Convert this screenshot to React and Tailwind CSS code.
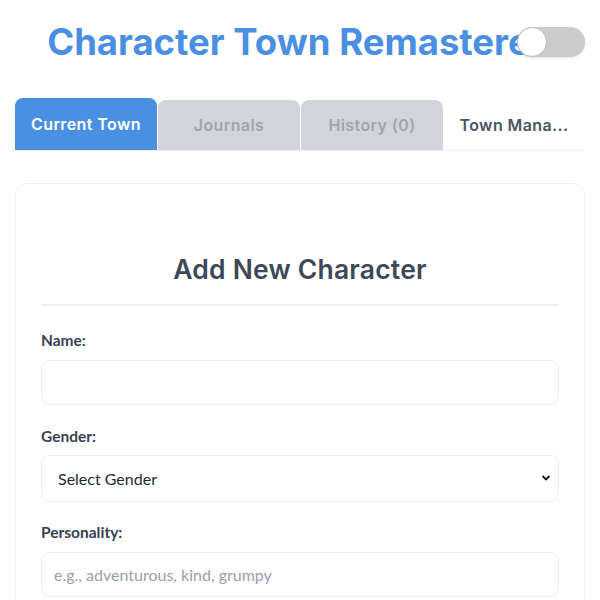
import { useState } from "react";

const heading = { fontFamily: "Inter, 'Noto Sans', sans-serif" };
const body = { fontFamily: "Lato, 'Liberation Sans', sans-serif" };

export default function App() {
    const [dark, setDark] = useState(false);
    const tabs = ["Current Town", "Journals", "History (0)", "Town Mana..."];

    return (
        <div className="min-h-screen bg-white px-[15px]" style={body}>
            {/* Header */}
            <div className="relative pt-[22px] h-[99px]">
                <h1
                    className="text-center text-[36.5px] font-bold leading-[40px] tracking-[0px] text-[#4a8fe2] whitespace-nowrap"
                    style={heading}
                >
                    Character Town Remastered
                </h1>
                <button
                    onClick={() => setDark(!dark)}
                    className="absolute right-0 top-[27px] h-[30px] w-[68px] rounded-full bg-[#cbcbcb] shadow-sm"
                >
                    <span className="absolute left-0 top-0 h-[30px] w-[30px] rounded-full bg-white border border-[#bdbdbd]" />
                </button>
            </div>

            {/* Tabs */}
            <div className="flex items-end border-b border-[#eef1f4] h-[52px]" style={heading}>
                {tabs.map((t, i) => (
                    <div
                        key={t}
                        className={
                            i === 0
                                ? "flex-1 h-[52px] flex items-center justify-center rounded-t-lg bg-[#4a90e2] text-white text-[16px] tracking-[0.4px] font-semibold"
                                : i === 3
                                ? "flex-1 h-[50px] flex items-center justify-center text-[#4b5563] text-[16px] tracking-[0.4px] font-semibold"
                                : "flex-1 h-[50px] ml-[1px] flex items-center justify-center rounded-t-lg bg-[#d1d5db] text-[#a0a6ae] text-[16px] tracking-[0.4px] font-semibold"
                        }
                    >
                        {t}
                    </div>
                ))}
            </div>

            {/* Card */}
            <div className="mt-[32px] rounded-xl border border-[#eef0f3] px-[25px] pt-[69px] pb-6">
                <h2
                    className="text-center text-[26.5px] font-semibold leading-[32px] tracking-[0.2px] text-[#3e4858]"
                    style={heading}
                >
                    Add New Character
                </h2>
                <div className="mt-[19px] h-[2px] bg-[#eceff5]" />

                <label className="block mt-[24px] text-[15.5px] font-bold text-[#374151] leading-[20px]">Name:</label>
                <input
                    type="text"
                    className="mt-[10px] block w-full h-[45px] rounded-lg border border-[#eceef2] px-3 text-[16px] outline-none"
                />

                <label className="block mt-[21px] text-[15.5px] font-bold text-[#374151] leading-[20px]">Gender:</label>
                <div className="relative mt-[9px]">
                    <select className="block w-full h-[47px] appearance-none rounded-lg border border-[#eceef2] bg-white pl-[16px] text-[16px] text-[#1f2937] outline-none">
                        <option>Select Gender</option>
                        <option>Male</option>
                        <option>Female</option>
                    </select>
                    <svg
                        className="pointer-events-none absolute right-[8px] top-[19px]"
                        width="10"
                        height="8"
                        viewBox="0 0 10 8"
                        fill="none"
                    >
                        <path d="M1.5 2l3.5 3.5L8.5 2" stroke="#111827" strokeWidth="1.8" />
                    </svg>
                </div>

                <label className="block mt-[20px] text-[15.5px] font-bold text-[#374151] leading-[20px]">Personality:</label>
                <input
                    type="text"
                    placeholder="e.g., adventurous, kind, grumpy"
                    className="mt-[10px] block w-full h-[45px] rounded-lg border border-[#eceef2] px-3 text-[16px] placeholder:text-[#9aa0a8] outline-none"
                />
            </div>
        </div>
    );
}
